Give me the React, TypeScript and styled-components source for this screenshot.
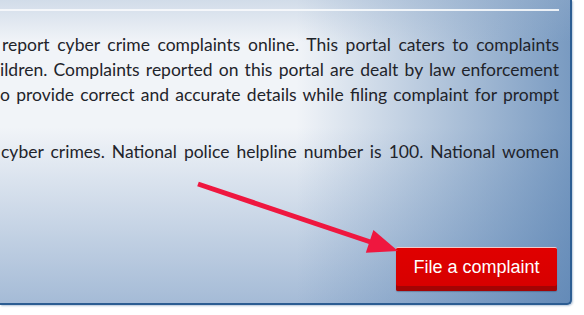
import React from "react";
import styled, { createGlobalStyle } from "styled-components";

const GlobalStyle = createGlobalStyle`
  html, body {
    margin: 0;
    padding: 0;
    background: #ffffff;
  }
  body {
    width: 584px;
    height: 315px;
    overflow: hidden;
  }
`;

const Page = styled.div`
  width: 584px;
  height: 315px;
  box-sizing: border-box;
  padding: 0 12px 10px 0;
  background: #ffffff;
`;

const Panel = styled.section`
  position: relative;
  height: 100%;
  box-sizing: border-box;
  padding: 9px 11px 0 0;
  border-right: 2px solid #2c5d92;
  border-bottom: 2px solid #2c5d92;
  border-bottom-right-radius: 5px;
  box-shadow: 1px 1px 2px rgba(44, 93, 146, 0.35);
  overflow: hidden;
  background:
    linear-gradient(to bottom, rgba(150, 175, 205, 0.35) 0%, rgba(150, 175, 205, 0) 14%),
    linear-gradient(to right, rgba(75, 120, 172, 0) 52%, rgba(75, 120, 172, 0.72) 100%),
    linear-gradient(to bottom, rgba(118, 152, 194, 0) 42%, rgba(118, 152, 194, 0.62) 100%),
    #f1f4f8;
`;

const Rule = styled.div`
  height: 2px;
  background: #f7f9fc;
  opacity: 0.9;
`;

const Body = styled.div`
  padding-top: 21px;
  font-family: Lato, "Noto Sans", sans-serif;
  font-size: 17.5px;
  line-height: 25px;
  color: #1f242b;
`;

const Paragraph = styled.p`
  margin: 0 0 7px 0;
`;

const Line = styled.span<{ $justify?: boolean; $indent?: number }>`
  display: block;
  white-space: nowrap;
  height: 25px;
  text-align: ${(p) => (p.$justify ? "justify" : "left")};
  text-align-last: ${(p) => (p.$justify ? "justify" : "left")};
  padding-left: ${(p) => p.$indent ?? 0}px;
`;

const ButtonRow = styled.div`
  display: flex;
  justify-content: flex-end;
  padding: 76px 2px 0 0;
`;

const ComplaintButton = styled.button`
  width: 161px;
  height: 44px;
  box-sizing: border-box;
  border: none;
  border-top: 1px solid #f3c9c9;
  border-radius: 2px;
  padding: 0 0 4px 0;
  background: linear-gradient(#e00000, #d60000);
  box-shadow: inset 0 -5px 0 #a30404, 0 1px 1px rgba(40, 60, 90, 0.35);
  color: #ffffff;
  font-family: "Liberation Sans", Arial, sans-serif;
  font-size: 18px;
  cursor: pointer;
`;

const ArrowLayer = styled.svg`
  position: absolute;
  left: 0;
  top: 0;
  pointer-events: none;
`;

const Pointer = () => (
  <ArrowLayer width={572} height={305} viewBox="0 0 572 305">
    <line
      x1={198}
      y1={184}
      x2={372}
      y2={242.5}
      stroke="#ef173f"
      strokeWidth={5}
    />
    <polygon points="398,251 373.4,230 365.8,252.8" fill="#ef173f" />
  </ArrowLayer>
);

export default function App() {
  return (
    <>
      <GlobalStyle />
      <Page>
        <Panel>
          <Rule />
          <Body>
            <Paragraph>
              <Line $justify $indent={2}>
                report cyber crime complaints online. This portal caters to
                complaints
              </Line>
              <Line $justify>
                ildren. Complaints reported on this portal are dealt by law
                enforcement
              </Line>
              <Line $justify>
                o provide correct and accurate details while filing complaint
                for prompt
              </Line>
              <Line />
            </Paragraph>
            <Paragraph>
              <Line $justify $indent={1}>
                cyber crimes. National police helpline number is 100. National
                women
              </Line>
            </Paragraph>
          </Body>
          <ButtonRow>
            <ComplaintButton>File a complaint</ComplaintButton>
          </ButtonRow>
          <Pointer />
        </Panel>
      </Page>
    </>
  );
}
